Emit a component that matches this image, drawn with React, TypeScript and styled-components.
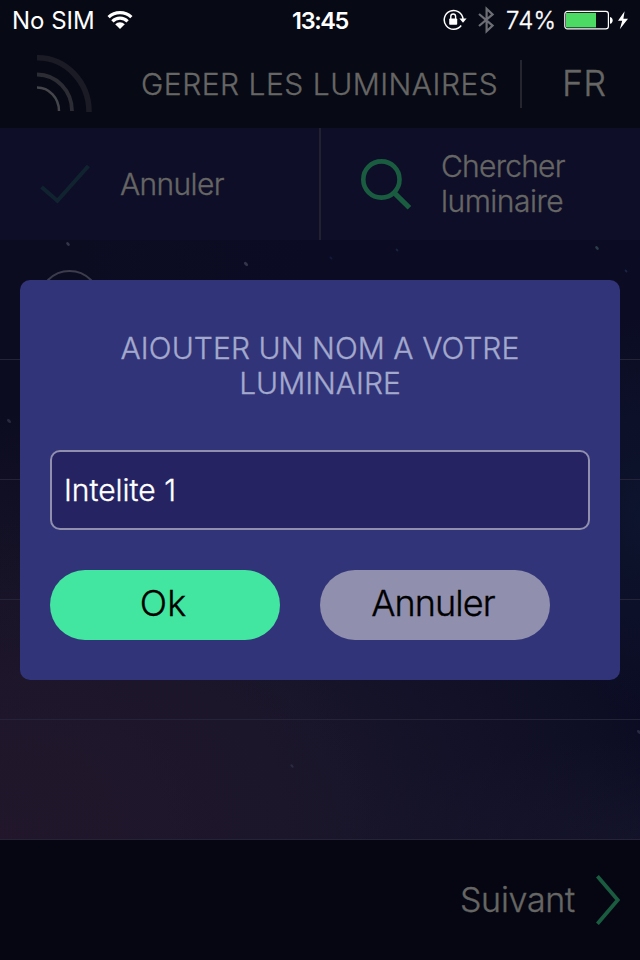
import React from "react";
import styled, { createGlobalStyle } from "styled-components";

const GlobalStyle = createGlobalStyle`
  * { box-sizing: border-box; }
  body { margin: 0; background: #070914; }
`;

const Screen = styled.main`
  position: relative;
  width: 640px;
  height: 960px;
  overflow: hidden;
  display: flex;
  flex-direction: column;
  font-family: Inter, "Liberation Sans", sans-serif;
  font-weight: 300;
  color: #666664;
`;

const Label = styled.span<{ $size?: number; $track?: number; $line?: number; $color?: string; $weight?: number }>`
  display: block;
  white-space: pre-line;
  font-size: ${(p) => p.$size ?? 30}px;
  letter-spacing: ${(p) => p.$track ?? 0}px;
  line-height: ${(p) => p.$line ?? 35}px;
  font-weight: ${(p) => p.$weight ?? 300};
  color: ${(p) => p.$color ?? "inherit"};
  -webkit-text-stroke: ${(p) => (p.$weight ? 0 : 0.35)}px currentColor;
`;

const StatusBar = styled.div`
  height: 40px;
  flex: none;
  display: grid;
  grid-template-columns: 1fr auto 1fr;
  align-items: center;
  padding: 2px 12px 0;
  background: #070914;
  color: #fff;
  svg { display: block; flex: none; }
`;

const StatusLeft = styled.div`
  display: flex;
  align-items: center;
  gap: 12px;
  svg { margin-top: -3px; }
`;

const StatusRight = styled.div`
  display: flex;
  align-items: center;
  justify-content: flex-end;
  svg { margin-top: -2px; }
`;

const Percent = styled.div`
  width: 69px;
  padding-left: 11px;
`;

const LockCell = styled.div`
  width: 35px;
`;

const Header = styled.header`
  height: 88px;
  flex: none;
  display: grid;
  grid-template-columns: 120px 400px 2px 1fr;
  align-items: center;
  background: #070914;
`;

const LogoCell = styled.div`
  padding-left: 37px;
  svg { display: block; }
`;

const TitleCell = styled.div`
  padding: 1px 0 0 21px;
`;

const HeaderRule = styled.div`
  height: 48px;
  background: #24252f;
`;

const LanguageCell = styled.div`
  padding: 0 0 2px 40px;
`;

const Actions = styled.nav`
  height: 112px;
  flex: none;
  display: grid;
  grid-template-columns: 321px 1fr;
  background: #0e0e28;
`;

const Action = styled.div<{ $divided?: boolean }>`
  display: flex;
  align-items: center;
  gap: 30px;
  padding: 1px 0 0 40px;
  border-right: ${(p) => (p.$divided ? "2px solid #21212f" : "none")};
  svg { display: block; flex: none; }
`;

const ActionText = styled.div`
  padding-bottom: 1px;
`;

const List = styled.section`
  position: relative;
  height: 600px;
  flex: none;
  background:
    radial-gradient(ellipse 380px 330px at 0% 100%, rgba(35, 22, 43, 0.8) 0%, rgba(35, 22, 43, 0) 100%),
    linear-gradient(180deg, rgba(9, 10, 34, 0) 35%, rgba(9, 10, 34, 0) 100%),
    radial-gradient(ellipse 590px 430px at 14% 100%, #1b172b 0%, rgba(27, 23, 43, 0.9) 40%, rgba(27, 23, 43, 0.45) 70%, rgba(27, 23, 43, 0) 100%),
    radial-gradient(ellipse 300px 100px at 100% 100%, rgba(20, 20, 44, 0.8) 0%, rgba(20, 20, 44, 0) 100%),
    radial-gradient(ellipse 100px 200px at 100% 46%, #0d142d 0%, rgba(13, 20, 45, 0) 100%),
    linear-gradient(90deg, #0c0c20 0%, #0b0c24 50%, #0b0c23 100%);
`;

const Row = styled.div`
  height: 120px;
  border-bottom: 1px solid #242338;
`;

const Sky = styled.svg`
  position: absolute;
  inset: 0;
`;

const Footer = styled.footer`
  height: 120px;
  flex: none;
  display: flex;
  align-items: center;
  justify-content: flex-end;
  padding-right: 20px;
  gap: 21px;
  background: #060612;
`;

const Dialog = styled.section`
  position: absolute;
  top: 280px;
  left: 20px;
  width: 600px;
  height: 400px;
  padding: 51px 30px 0;
  border-radius: 10px;
  background: #323479;
`;

const DialogTitle = styled.h1`
  margin: 0;
  height: 119px;
  display: flex;
  flex-direction: column;
  align-items: center;
`;

const Field = styled.div`
  height: 80px;
  display: flex;
  align-items: center;
  padding-left: 12px;
  border: 2px solid #908fae;
  border-radius: 10px;
  background: #252362;
`;

const Buttons = styled.div`
  display: flex;
  gap: 40px;
  margin-top: 40px;
`;

const Button = styled.button<{ $fill: string }>`
  width: 230px;
  height: 70px;
  padding: 0 4px 3px 0;
  border: 0;
  border-radius: 35px;
  background: ${(p) => p.$fill};
  font-family: inherit;
  display: flex;
  align-items: center;
  justify-content: center;
`;

const WifiIcon = () => (
  <svg width="26" height="20" viewBox="0 0 26 20">
    <g fill="none" stroke="#fff" strokeWidth="3.2">
      <path d="M1.6 7.2 A16.4 16.4 0 0 1 24.4 7.2" />
      <path d="M5.4 11.3 A10.8 10.8 0 0 1 20.6 11.3" />
    </g>
    <path d="M13 19 L8.2 14.2 A6.8 6.8 0 0 1 17.8 14.2 Z" fill="#fff" />
  </svg>
);

const RotationLock = () => (
  <svg width="24" height="22" viewBox="0 0 24 22">
    <path d="M18.2 16.5 A9.4 9.4 0 1 1 20 10" fill="none" stroke="#fff" strokeWidth="1.5" />
    <path d="M16.4 9.4 H23.6 L20 13.8 Z" fill="#fff" />
    <rect x="6.2" y="9.4" width="8" height="6.4" rx="0.8" fill="#fff" />
    <path d="M7.8 10 V7.4 A2.4 2.4 0 0 1 12.6 7.4 V10" fill="none" stroke="#fff" strokeWidth="1.4" />
  </svg>
);

const Bluetooth = () => (
  <svg width="17" height="28" viewBox="0 0 17 28">
    <path d="M1 8 L14.6 19.6 L8.6 25.2 V2.8 L14.6 8.4 L1 20" fill="none" stroke="#6d6e75" strokeWidth="2.2" />
  </svg>
);

const Battery = () => (
  <svg width="64" height="20" viewBox="0 0 64 20">
    <rect x="0.8" y="1.3" width="43.6" height="17.6" rx="2.6" fill="none" stroke="#fff" strokeWidth="1.2" />
    <rect x="2" y="2.9" width="30" height="14.5" fill="#4cd964" />
    <path d="M46 7 C49.6 7.4 49.6 13.4 46 13.8 Z" fill="#fff" />
    <path d="M60.6 1.2 L54 10.8 H58.2 L55.8 19.2 L64 8.8 H59.4 Z" fill="#fff" />
  </svg>
);

const Logo = () => (
  <svg width="56" height="58" viewBox="0 0 56 58">
    <g fill="none">
      <path d="M0 2.8 A51.5 54 0 0 1 52 57" stroke="#1b1b26" strokeWidth="5.6" />
      <path d="M0 19.5 A34.8 36.5 0 0 1 35 56" stroke="#2b2c34" strokeWidth="3.8" />
      <path d="M0 32.6 A22 23.4 0 0 1 22 56" stroke="#45464c" strokeWidth="2.5" />
    </g>
  </svg>
);

const Check = () => (
  <svg width="50" height="40" viewBox="0 0 50 40">
    <path d="M1.5 22 L17.4 35.8 L48.4 1" fill="none" stroke="#10232f" strokeWidth="4" />
  </svg>
);

const Search = () => (
  <svg width="50" height="51" viewBox="0 0 50 51">
    <circle cx="20.4" cy="20.5" r="18.1" fill="none" stroke="#1a5c40" strokeWidth="4.6" />
    <path d="M33 33.6 L48.4 48.8" stroke="#1a5c40" strokeWidth="5" />
  </svg>
);

const Chevron = () => (
  <svg width="24" height="50" viewBox="0 0 24 50">
    <path d="M1.4 1.2 L21.8 25 L1.4 48.8" fill="none" stroke="#1a5c40" strokeWidth="3.8" />
  </svg>
);

const stars = [
  { x: 68, y: 4, r: 2.2, fill: "#34344a" },
  { x: 246, y: 24, r: 2.5, fill: "#34344a" },
  { x: 597, y: 8, r: 2.2, fill: "#2a3c4a" },
  { x: 397, y: 10, r: 1.6, fill: "#182440" },
  { x: 331, y: 18, r: 1.8, fill: "#14183a" },
  { x: 626, y: 31, r: 1.6, fill: "#1b2444" },
  { x: 9, y: 181, r: 2.4, fill: "#282840" },
  { x: 639, y: 492, r: 2.4, fill: "#282a44" },
  { x: 292, y: 526, r: 2, fill: "#2a2a40" },
];

export default function App() {
  return (
    <>
      <GlobalStyle />
      <Screen>
        <StatusBar>
          <StatusLeft>
            <Label $size={24} $line={38} $weight={400}>No SIM</Label>
            <WifiIcon />
          </StatusLeft>
          <Label $size={23.5} $line={38} $weight={600} $track={-1.4}>13:45</Label>
          <StatusRight>
            <LockCell><RotationLock /></LockCell>
            <Bluetooth />
            <Percent><Label $size={24} $line={38} $track={0.2}>74%</Label></Percent>
            <Battery />
          </StatusRight>
        </StatusBar>
        <Header>
          <LogoCell><Logo /></LogoCell>
          <TitleCell><Label $track={0.5}>GERER LES LUMINAIRES</Label></TitleCell>
          <HeaderRule />
          <LanguageCell><Label $size={36}>FR</Label></LanguageCell>
        </Header>
        <Actions>
          <Action $divided>
            <Check />
            <Label $track={-0.65}>Annuler</Label>
          </Action>
          <Action>
            <Search />
            <ActionText>
              <Label $track={-0.75}>Chercher</Label>
              <Label $track={-0.5}>luminaire</Label>
            </ActionText>
          </Action>
        </Actions>
        <List>
          <Sky width="640" height="600" viewBox="0 0 640 600">
            {stars.map((s) => (
              <ellipse key={`${s.x}-${s.y}`} cx={s.x} cy={s.y} rx={s.r} ry={s.r * 0.6} fill={s.fill} transform={`rotate(45 ${s.x} ${s.y})`} />
            ))}
            <circle cx="69.5" cy="61" r="30" fill="none" stroke="#3c3c4c" strokeWidth="2" />
          </Sky>
          <Row /><Row /><Row /><Row /><Row />
        </List>
        <Footer>
          <Label $size={34} $line={40} $track={-0.25}>Suivant</Label>
          <Chevron />
        </Footer>
        <Dialog>
          <DialogTitle>
            <Label $color="#a3a9cd" $track={0.08}>AIOUTER UN NOM A VOTRE</Label>
            <Label $color="#a3a9cd">LUMINAIRE</Label>
          </DialogTitle>
          <Field><Label $color="#fff">Intelite 1</Label></Field>
          <Buttons>
            <Button $fill="#42e6a0"><Label $size={36} $color="#000">Ok</Label></Button>
            <Button $fill="#908fae"><Label $size={36} $color="#000" $track={-0.95}>Annuler</Label></Button>
          </Buttons>
        </Dialog>
      </Screen>
    </>
  );
}
